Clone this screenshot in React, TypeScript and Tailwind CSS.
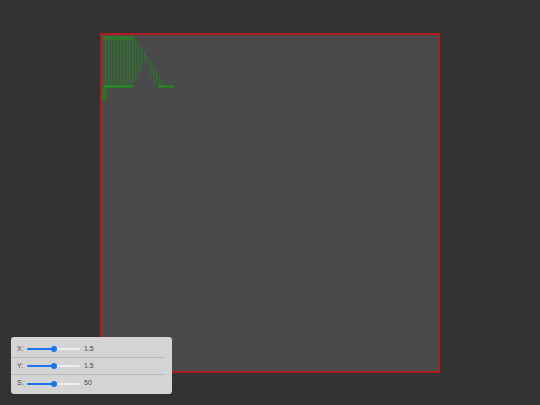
const sliders = [
  { label: "X:", value: "1.5", pct: 50 },
  { label: "Y:", value: "1.5", pct: 50 },
  { label: "S:", value: "50", pct: 50 },
]

function Slider({ pct }: { pct: number }) {
  return (
    <div className="relative w-[53px] h-[6px] flex items-center">
      <div className="w-full h-[2px] rounded-full bg-[#efefef] flex">
        <div className="h-full rounded-full bg-[#1a74f2]" style={{ width: `${pct}%` }} />
      </div>
      <div
        className="absolute top-0 w-[6px] h-[6px] -ml-[3px] rounded-full bg-[#1a74f2]"
        style={{ left: `${pct}%` }}
      />
    </div>
  )
}

function PointCloud() {
  return (
    <svg className="absolute inset-0 w-full h-full" viewBox="0 0 336 336">
      <defs>
        <pattern id="stripes" width="3" height="3" patternUnits="userSpaceOnUse">
          <rect x="0" y="0" width="1.4" height="3" fill="#1e8c1e" opacity="0.5" />
        </pattern>
        <linearGradient id="fade" x1="0" y1="0" x2="0" y2="1">
          <stop offset="0" stopColor="#fff" stopOpacity="1" />
          <stop offset="1" stopColor="#fff" stopOpacity="0.5" />
        </linearGradient>
        <mask id="fadeMask">
          <rect x="0" y="0" width="336" height="336" fill="url(#fade)" />
        </mask>
        <filter id="soft" x="-10%" y="-10%" width="120%" height="120%">
          <feGaussianBlur stdDeviation="0.7" />
        </filter>
      </defs>
      <g filter="url(#soft)">
        <g mask="url(#fadeMask)">
          <polygon points="1,1 32,1 64,51 52,51 44,22 31,51 1,51" fill="url(#stripes)" />
          <polygon points="1,1 32,1 64,51 52,51 44,22 31,51 1,51" fill="#1e8c1e" opacity="0.12" />
        </g>
        <rect x="1" y="1" width="31" height="4" fill="#1e8c1e" opacity="0.45" />
        <line x1="2" y1="51.5" x2="31" y2="51.5" stroke="#1c9a1c" strokeWidth="2.2" opacity="0.85" />
        <line x1="56" y1="51.5" x2="72" y2="51.5" stroke="#1c9a1c" strokeWidth="2" opacity="0.8" />
        <rect x="0" y="50" width="5" height="16" fill="#1c8c1c" opacity="0.5" />
      </g>
    </svg>
  )
}

export default function App() {
  return (
    <div className="relative w-[540px] h-[405px] bg-[#333333] flex items-center justify-center font-['Liberation_Sans',Arial,sans-serif]">
      <div className="relative w-[340px] h-[340px] border-2 border-[#b01c1c] bg-[#4a4a4a]">
        <PointCloud />
      </div>

      {/* Controls */}
      <div className="absolute left-[11px] bottom-[11px] w-[161px] rounded-[3px] bg-[#d4d4d4] pt-[4px] pb-[2px] text-[7px] text-[#4a4a4a]">
        {sliders.map((s, i) => (
          <div
            key={s.label}
            className={`flex items-center h-[17px] mr-[7px] pl-[6px] ${i < sliders.length - 1 ? "border-b border-[#bdbdbd]" : ""}`}
          >
            <span className="w-[10px]">{s.label}</span>
            <Slider pct={s.pct} />
            <span className="ml-[4px]">{s.value}</span>
          </div>
        ))}
      </div>
    </div>
  )
}
